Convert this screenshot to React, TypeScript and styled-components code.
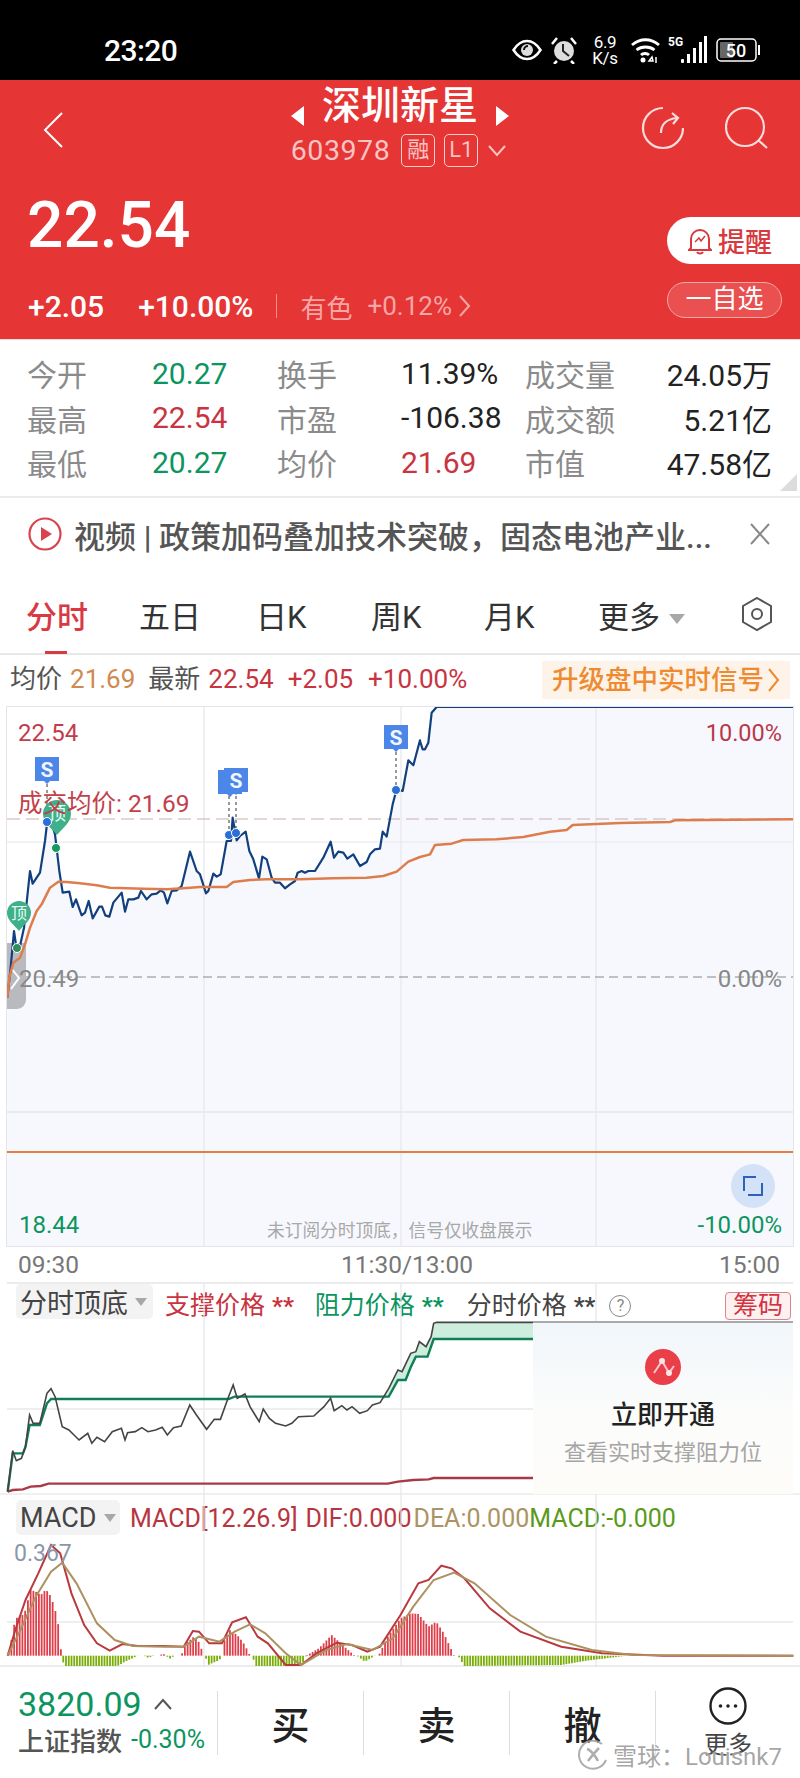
import React from 'react'
import styled, { createGlobalStyle } from 'styled-components'

const GlobalStyle = createGlobalStyle`
  html, body {
    margin: 0;
    padding: 0;
    background: #fff;
  }
  * {
    box-sizing: border-box;
  }
`

const FONT = `Roboto, "Noto Sans CJK SC", sans-serif`
const RED = '#c8343f'
const GREEN = '#0c9560'

// traced from the reference, converted to page pixels below
const priceRaw = [[22,890],[32,800],[42,690],[50,745],[60,735],[72,680],[90,510],[98,548],[120,515],[135,420],[142,360],[155,365],[165,400],[178,510],[188,575],[208,572],[218,618],[228,595],[245,643],[255,635],[266,600],[278,652],[298,617],[306,617],[316,643],[328,647],[340,605],[365,575],[375,632],[385,595],[400,595],[415,590],[423,570],[440,595],[455,580],[470,578],[482,568],[492,575],[502,607],[515,570],[530,568],[545,555],[570,452],[590,510],[600,520],[618,577],[625,570],[640,518],[650,527],[662,520],[680,420],[693,420],[698,350],[710,418],[720,405],[737,392],[748,450],[760,475],[777,532],[787,467],[800,475],[815,530],[825,545],[840,545],[855,562],[870,550],[885,540],[893,515],[905,510],[915,515],[925,510],[945,510],[970,470],[992,422],[1002,470],[1015,452],[1030,455],[1042,473],[1060,460],[1080,495],[1100,483],[1110,460],[1125,445],[1140,443],[1148,392],[1160,407],[1178,310],[1190,265],[1208,270],[1225,178],[1240,193],[1260,118],[1260,120],[1268,145],[1275,145],[1285,125],[1295,35],[1310,18],[2379,18]]
const avgRaw = [[22,890],[28,830],[40,785],[60,770],[75,730],[90,680],[110,630],[125,610],[150,560],[175,542],[200,543],[240,547],[290,553],[330,560],[380,562],[430,563],[500,565],[550,562],[600,558],[680,558],[700,543],[750,537],[800,535],[900,535],[1000,532],[1100,530],[1150,525],[1190,512],[1225,482],[1260,468],[1290,460],[1305,432],[1355,428],[1390,417],[1490,415],[1570,408],[1650,392],[1700,387],[1718,372],[1860,366],[2010,363],[2025,358],[2379,355]]
const toneRaw = [[15,605],[25,482],[32,512],[42,505],[50,470],[58,375],[65,400],[78,400],[92,310],[100,296],[108,320],[122,410],[135,420],[145,435],[155,450],[172,430],[180,460],[190,442],[205,455],[220,425],[238,415],[245,450],[250,428],[265,425],[278,413],[290,425],[305,420],[318,412],[328,435],[340,413],[355,408],[372,345],[385,375],[405,418],[420,388],[432,388],[448,320],[457,285],[465,325],[480,312],[490,350],[500,375],[508,395],[516,357],[528,385],[540,400],[560,408],[572,400],[585,380],[615,378],[635,350],[648,325],[655,362],[670,347],[680,360],[690,350],[705,370],[720,362],[730,345],[745,338],[762,295],[780,240],[788,245],[805,190],[815,185],[822,155],[835,170],[845,140],[850,100],[856,97],[1045,97]]
const resistRaw = [[15,605],[25,490],[45,490],[50,470],[58,405],[78,405],[92,340],[100,327],[448,327],[460,320],[762,320],[780,270],[795,270],[805,232],[815,200],[838,200],[850,147],[1045,147]]
const supportRaw = [[15,605],[25,600],[45,598],[60,590],[80,588],[95,581],[760,581],[780,575],[810,570],[840,568],[850,564],[1045,564]]
const difRaw = [[15,497],[30,420],[50,330],[75,250],[100,165],[118,190],[140,310],[165,405],[190,460],[215,482],[240,462],[270,468],[320,468],[360,470],[378,423],[390,425],[410,460],[435,460],[455,397],[482,382],[505,440],[525,460],[560,525],[590,525],[620,490],[660,458],[690,465],[720,485],[745,470],[785,375],[820,280],[840,270],[865,227],[885,235],[910,265],[960,355],[1020,425],[1100,470],[1180,490],[1300,497],[1555,497]]
const deaRaw = [[15,497],[40,420],[70,320],[100,245],[122,218],[150,280],[190,400],[225,450],[260,468],[320,470],[360,470],[390,440],[430,455],[460,425],[490,403],[520,430],[560,490],[590,525],[640,480],[680,462],[730,480],[770,445],[810,350],[850,270],[890,248],[930,280],[1000,375],[1070,440],[1160,480],[1240,495],[1555,497]]

const barSegments: { color: string; pts: number[][] }[] = [
  { color: '#df3f4b', pts: [[15,497],[20,470],[30,385],[40,380],[48,370],[60,300],[70,305],[80,315],[90,298],[100,320],[110,370],[118,435],[120,497]] },
  { color: '#7aad08', pts: [[122,497],[125,528],[230,528],[245,515],[270,497]] },
  { color: '#7aad08', pts: [[282,497],[290,503],[302,497]] },
  { color: '#df3f4b', pts: [[314,497],[318,490],[326,497]] },
  { color: '#7aad08', pts: [[326,497],[332,507],[342,497]] },
  { color: '#df3f4b', pts: [[355,497],[365,460],[380,440],[392,460],[398,497]] },
  { color: '#7aad08', pts: [[402,497],[408,525],[430,510],[436,497]] },
  { color: '#df3f4b', pts: [[438,497],[440,450],[450,420],[465,435],[480,465],[490,497]] },
  { color: '#7aad08', pts: [[495,497],[500,528],[590,528],[600,497]] },
  { color: '#df3f4b', pts: [[600,497],[625,475],[650,435],[675,470],[695,497]] },
  { color: '#7aad08', pts: [[700,497],[715,515],[735,497]] },
  { color: '#df3f4b', pts: [[742,497],[760,440],[785,385],[805,370],[820,372],[840,410],[855,395],[870,430],[890,497]] },
  { color: '#7aad08', pts: [[898,497],[910,528],[1100,525],[1150,512],[1230,497]] },
]

const main = (raw: number[][]) => raw.map(([x, y]) => [x / 3, 700 + y / 3])
const lower = (raw: number[][]) => raw.map(([x, y]) => [x / 1.96, 1290 + y / 3])
const macd = (raw: number[][]) => raw.map(([x, y]) => [x / 1.96, 1490 + y / 3])
const line = (pts: number[][]) => pts.map((p) => p.join(',')).join(' ')

const interp = (pts: number[][], x: number) => {
  for (let i = 1; i < pts.length; i++) {
    if (x <= pts[i][0]) {
      const [x0, y0] = pts[i - 1]
      const [x1, y1] = pts[i]
      return y0 + ((y1 - y0) * (x - x0)) / (x1 - x0 || 1)
    }
  }
  return pts[pts.length - 1][1]
}

const Page = styled.div`
  position: relative;
  width: 800px;
  height: 1778px;
  overflow: hidden;
  background: #fff;
  font-family: ${FONT};
`

/* status bar */
const StatusBar = styled.div`
  height: 80px;
  background: #000;
  color: #fff;
  display: flex;
  align-items: center;
  padding: 20px 40px 0 104px;
`
const Clock = styled.div`
  font-size: 30px;
  font-weight: 500;
  letter-spacing: -0.6px;
`
const StatusIcons = styled.div`
  margin-left: auto;
  display: flex;
  align-items: center;
`
const StatusIcon = styled.svg<{ $gap?: number }>`
  display: block;
  margin-left: ${(p) => p.$gap ?? 0}px;
`
const NetSpeed = styled.div`
  margin-left: 15px;
  width: 26px;
  font-size: 17px;
  line-height: 16px;
  text-align: center;
  letter-spacing: -0.3px;
`

/* red quote header */
const Header = styled.div`
  height: 260px;
  background: #e53535;
  color: #fff;
  border-bottom: 1px solid #f6dcd8;
`
const NavRow = styled.div`
  display: grid;
  grid-template-columns: 1fr auto 1fr;
  height: 92px;
  padding: 0 29px;
`
const NavLeft = styled.div`
  padding: 31px 0 0 13px;
`
const NavCenter = styled.div`
  display: flex;
  flex-direction: column;
  align-items: center;
`
const TitleRow = styled.div`
  display: flex;
  align-items: center;
  gap: 18px;
  height: 52px;
`
const Title = styled.div`
  font-size: 39px;
  line-height: 50px;
  font-weight: 500;
`
const Arrow = styled.div<{ $right?: boolean }>`
  width: 0;
  height: 0;
  margin-top: 20px;
  border-top: 10px solid transparent;
  border-bottom: 10px solid transparent;
  ${(p) => (p.$right ? 'border-left: 13px solid #fff;' : 'border-right: 13px solid #fff;')}
`
const CodeRow = styled.div`
  display: flex;
  align-items: center;
  gap: 9px;
  height: 36px;
  color: #f8c4c2;
`
const Code = styled.div`
  font-size: 28.5px;
  letter-spacing: 0.6px;
  margin-right: 2px;
`
const Badge = styled.div`
  width: 34px;
  height: 33px;
  border: 1.5px solid #f8cfcd;
  border-radius: 5px;
  font-size: 22px;
  line-height: 30px;
  text-align: center;
`
const NavRight = styled.div`
  display: flex;
  justify-content: flex-end;
  gap: 41px;
  padding-top: 26px;
`
const QuoteRow = styled.div`
  display: flex;
  justify-content: space-between;
  padding-left: 28px;
  padding-top: 16px;
`
const Price = styled.div`
  font-size: 64px;
  line-height: 76px;
  font-weight: 500;
  margin-left: -1px;
`
const Changes = styled.div`
  display: flex;
  align-items: center;
  margin-top: 24px;
  height: 36px;
`
const Change = styled.div`
  font-size: 30px;
  font-weight: 500;
  margin-right: 34px;
`
const SectorDivider = styled.div`
  width: 1px;
  height: 24px;
  background: #f2908e;
  margin: 0 23px 0 -11px;
`
const Sector = styled.div<{ $gap: number }>`
  font-size: 26px;
  color: #f6a7a5;
  margin-right: ${(p) => p.$gap}px;
`
const QuoteActions = styled.div`
  display: flex;
  flex-direction: column;
  align-items: flex-end;
  width: 133px;
  padding-top: 29px;
`
const AlertButton = styled.div`
  width: 133px;
  height: 47px;
  flex-shrink: 0;
  background: #fff;
  border-radius: 24px 0 0 24px;
  color: #d63a3f;
  display: flex;
  align-items: center;
  gap: 6px;
  padding-left: 21px;
  font-size: 27px;
  font-weight: 500;
`
const WatchButton = styled.div`
  width: 115px;
  height: 36px;
  flex-shrink: 0;
  margin: 18px 18px 0 0;
  border: 1.5px solid #f3a9a8;
  border-radius: 18px;
  background: #e9504f;
  font-size: 26px;
  line-height: 32px;
  text-align: center;
`

/* stats grid */
const Stats = styled.div`
  position: relative;
  height: 158px;
  padding: 11px 28px 0 27px;
  border-bottom: 2px solid #ececec;
  display: grid;
  grid-template-columns: 125px 125px 124px 124px 120px 127px;
  grid-auto-rows: 44.5px;
  align-items: center;
  font-size: 30px;
`
const StatLabel = styled.div`
  color: #8b8b8b;
  font-size: 30px;
`
const StatValue = styled.div<{ $color?: string; $right?: boolean }>`
  color: ${(p) => p.$color || '#222'};
  text-align: ${(p) => (p.$right ? 'right' : 'left')};
  white-space: nowrap;
`
const CornerMark = styled.div`
  position: absolute;
  right: 3px;
  bottom: 5px;
  width: 17px;
  height: 17px;
  background: #dcdcdc;
  clip-path: polygon(100% 0, 100% 100%, 0 100%);
`

/* news strip */
const News = styled.div`
  height: 72px;
  padding: 0 29px 0 28px;
  display: flex;
  align-items: center;
  gap: 12px;
  color: #555;
`
const NewsText = styled.div`
  flex: 1;
  font-size: 31px;
  font-weight: 500;
  white-space: nowrap;
  overflow: hidden;
`

/* period tabs */
const Tabs = styled.div`
  position: relative;
  height: 85px;
  padding: 26px 27px 0 26px;
  border-bottom: 2px solid #e8e8e8;
  display: grid;
  grid-template-columns: 113px 117px 115px 113px 114px 1fr auto;
  font-size: 31px;
  color: #333;
`
const Tab = styled.div<{ $active?: boolean }>`
  position: relative;
  display: flex;
  align-items: flex-start;
  gap: 9px;
  line-height: 44px;
  color: ${(p) => (p.$active ? '#d83a45' : '#333')};
  ${(p) => p.$active && 'font-weight: 500;'}
`
const TabMark = styled.div`
  position: absolute;
  left: 19px;
  bottom: -1px;
  width: 22px;
  height: 3px;
  background: #d83a45;
`
const Caret = styled.div<{ $size?: number; $top?: number }>`
  width: 0;
  height: 0;
  margin-top: ${(p) => p.$top ?? 0}px;
  border-left: ${(p) => p.$size || 8}px solid transparent;
  border-right: ${(p) => p.$size || 8}px solid transparent;
  border-top: ${(p) => (p.$size || 8) + 2}px solid #a8a8a8;
`

/* last price bar */
const PriceBar = styled.div`
  height: 52px;
  padding: 6px 10px 0;
  display: flex;
  align-items: flex-start;
  font-size: 26px;
  line-height: 36px;
`
const BarText = styled.span<{ $color: string; $gap: number }>`
  color: ${(p) => p.$color};
  margin-right: ${(p) => p.$gap}px;
  white-space: nowrap;
`
const Upgrade = styled.div`
  margin-left: auto;
  height: 38px;
  width: 248px;
  padding-left: 10px;
  background: #fdf3e8;
  color: #ee8b30;
  font-size: 26.5px;
  font-weight: 500;
  display: flex;
  align-items: center;
  gap: 3px;
`

/* main chart */
const ChartBox = styled.div`
  position: relative;
  width: 786px;
  height: 539px;
  margin-left: 7px;
  outline: 1px solid #e4e4ea;
`
const ChartSvg = styled.svg`
  display: block;
  overflow: visible;
`
const ChartLabel = styled.div<{ $x?: number; $right?: number; $y: number; $color: string; $size?: number }>`
  position: absolute;
  top: ${(p) => p.$y}px;
  ${(p) => (p.$right !== undefined ? `right: ${p.$right}px;` : `left: ${p.$x}px;`)}
  color: ${(p) => p.$color};
  font-size: ${(p) => p.$size || 24}px;
  line-height: 30px;
  white-space: nowrap;
`
const ExpandButton = styled.div`
  position: absolute;
  right: 18px;
  top: 457px;
  width: 44px;
  height: 44px;
  border-radius: 50%;
  background: #d4e2f8;
  display: flex;
  align-items: center;
  justify-content: center;
`

const TimeRow = styled.div`
  height: 38px;
  margin: 0 7px;
  padding: 0 13px 0 11px;
  border-bottom: 2px solid #ececec;
  display: flex;
  justify-content: space-between;
  align-items: center;
  font-size: 24.5px;
  color: #777;
`
const MiddleTime = styled.span`
  margin-left: 16px;
`

/* indicator header rows */
const IndicatorRow = styled.div<{ $height: number; $size: number }>`
  height: ${(p) => p.$height}px;
  padding-left: 16px;
  display: flex;
  align-items: flex-start;
  font-size: ${(p) => p.$size}px;
  white-space: nowrap;
`
const Chip = styled.div<{ $width: number; $height: number; $top?: number }>`
  width: ${(p) => p.$width}px;
  height: ${(p) => p.$height}px;
  margin-top: ${(p) => p.$top ?? 0}px;
  padding-left: 4px;
  background: #f3f3f3;
  border-radius: 5px;
  color: #444;
  display: flex;
  align-items: center;
  gap: 7px;
  font-size: 27px;
`
const Legend = styled.span<{ $color: string; $gap?: number; $top?: number }>`
  color: ${(p) => p.$color};
  margin-left: ${(p) => p.$gap ?? 0}px;
  margin-top: ${(p) => p.$top ?? 3}px;
  line-height: 38px;
`
const Stars = styled.span`
  margin-left: 7px;
  font-size: 24px;
  font-weight: 700;
`
const Help = styled.div`
  width: 22px;
  height: 22px;
  margin: 11px 0 0 14px;
  border: 1px solid #888;
  border-radius: 50%;
  color: #888;
  font-size: 16px;
  line-height: 20px;
  text-align: center;
`
const ChipsButton = styled.div`
  width: 66px;
  height: 28px;
  margin: 8px 9px 0 auto;
  border: 1.5px solid #d9868c;
  border-radius: 4px;
  background: #fdf0f0;
  color: #d3343f;
  font-size: 25px;
  line-height: 25px;
  text-align: center;
`

const LowerChart = styled.div`
  position: relative;
  height: 173px;
  border-bottom: 2px solid #f0f0f0;
`
const Promo = styled.div`
  position: absolute;
  left: 533px;
  top: 0;
  width: 260px;
  height: 173px;
  padding-top: 26px;
  background: linear-gradient(180deg, #f1f6fa 0%, #fcfcfb 55%, #fdfcf9 100%);
  border-top: 2px solid #aaa;
  display: flex;
  flex-direction: column;
  align-items: center;
  margin-top: -1px;
`
const PromoTitle = styled.div`
  margin-top: 11px;
  font-size: 26px;
  font-weight: 500;
  line-height: 38px;
  color: #222;
`
const PromoText = styled.div`
  margin-top: 3px;
  font-size: 22px;
  line-height: 32px;
  color: #a5a5a5;
`

const MacdChart = styled.div`
  height: 127px;
  border-bottom: 2px solid #ececec;
`

/* bottom bar */
const BottomBar = styled.div`
  position: relative;
  height: 111px;
  display: grid;
  grid-template-columns: 218px 146px 146px 146px 1fr;
  align-items: center;
`
const IndexCell = styled.div`
  padding-left: 18px;
  height: 64px;
  border-right: 1px solid #ddd;
`
const IndexTop = styled.div`
  display: flex;
  align-items: center;
  gap: 11px;
  height: 36px;
  margin-top: -5px;
  color: ${GREEN};
  font-size: 34px;
`
const IndexBottom = styled.div`
  display: flex;
  align-items: center;
  gap: 9px;
  height: 36px;
  color: ${GREEN};
  font-size: 25px;
`
const IndexName = styled.span`
  color: #555;
  font-weight: 500;
  font-size: 26px;
`
const TradeCell = styled.div`
  height: 64px;
  border-right: 1px solid #ddd;
  display: flex;
  align-items: center;
  justify-content: center;
  font-size: 38px;
  font-weight: 500;
  color: #222;
`
const MoreCell = styled.div`
  display: flex;
  flex-direction: column;
  align-items: center;
  gap: 4px;
  margin-top: 2px;
  font-size: 24px;
  line-height: 32px;
  color: #444;
`
const Watermark = styled.div`
  position: absolute;
  left: 578px;
  top: 70px;
  display: flex;
  align-items: center;
  gap: 5px;
  font-size: 24px;
  color: rgba(150, 150, 150, 0.85);
  text-shadow: 0 0 2px #fff;
`

const StatusIconSet = () => (
  <StatusIcons>
    <StatusIcon width="30" height="22" viewBox="0 0 30 22" fill="none">
      <path d="M1.5 11C6 4 10.500 2 15 2s9 2 13.500 9C24 18 19.500 20 15 20S6 18 1.500 11z" stroke="#fff" strokeWidth="2.500" />
      <circle cx="15" cy="11" r="6" fill="#ddd" />
      <path d="M12 11a4 4 0 0 1 4-4" stroke="#111" strokeWidth="2" />
    </StatusIcon>
    <StatusIcon $gap={9} width="26" height="28" viewBox="0 0 26 28" fill="none">
      <circle cx="13" cy="15" r="10" fill="#ddd" />
      <path d="M12 8v7l6 5" stroke="#222" strokeWidth="2" />
      <path d="M1 8l5-6M25 8l-5-6M6 25l-3 3M20 25l3 3" stroke="#fff" strokeWidth="2.500" />
    </StatusIcon>
    <NetSpeed>
      6.9
      <br />
      K/s
    </NetSpeed>
    <StatusIcon $gap={13} width="29" height="26" viewBox="0 0 29 26" fill="none" stroke="#fff" strokeWidth="2.800">
      <path d="M1 8c8-7 19-7 27 0M5.500 13c5-4 13-4 18 0M10 18c2-2 6-2 8 0" />
      <circle cx="12" cy="23" r="2.500" fill="#fff" stroke="none" />
      <path d="M18 24h4l-1-4zM25 20v6" strokeWidth="1.500" />
    </StatusIcon>
    <StatusIcon $gap={8} width="39" height="30" viewBox="0 0 39 30" fill="#fff">
      <text x="0" y="11" fontSize="12" fontFamily="Roboto" fontWeight="700">5G</text>
      <rect x="13" y="24" width="3" height="4" rx="1" />
      <rect x="19" y="19" width="3" height="9" />
      <rect x="25" y="13" width="3" height="15" />
      <rect x="31" y="7" width="3" height="21" />
      <rect x="36" y="1" width="3" height="27" />
    </StatusIcon>
    <StatusIcon $gap={9} width="44" height="26" viewBox="0 0 44 26" fill="none">
      <rect x="1" y="2" width="39" height="22" rx="4" stroke="#fff" strokeWidth="1.500" />
      <rect x="4" y="5" width="13" height="16" rx="1" fill="#666" />
      <text x="20" y="19.500" textAnchor="middle" fontSize="18" fontFamily="Roboto" fontWeight="500" fill="#fff">50</text>
      <rect x="42" y="8" width="2" height="10" fill="#fff" />
    </StatusIcon>
  </StatusIcons>
)

const Thin = ({ d, color, w, h, width = 2 }: { d: string; color: string; w: number; h: number; width?: number }) => (
  <svg width={w} height={h} viewBox={`0 0 ${w} ${h}`} fill="none" stroke={color} strokeWidth={width}>
    <path d={d} />
  </svg>
)

const VerticalGrid = ({ y1, y2 }: { y1: number; y2: number }) => (
  <>
    {[204, 401, 596].map((x) => (
      <line key={x} x1={x} x2={x} y1={y1} y2={y2} stroke="#e6e6ec" strokeWidth="1.2" />
    ))}
  </>
)

const SignalTag = ({ x, y }: { x: number; y: number }) => (
  <g>
    <path d={`M${x - 12} ${y}h24v24h-9l-3 3-3-3h-9z`} fill="#4b86e8" />
    <text x={x} y={y + 20} textAnchor="middle" fontSize="21" fontWeight="700" fontFamily="Roboto" fill="#f2f6ff">S</text>
  </g>
)

const TopMark = ({ x, y, r }: { x: number; y: number; r: number }) => (
  <g>
    <path d={`M${x - r} ${y}a${r} ${r} 0 1 1 ${r * 2} 0c0 ${r * 0.6}-${r * 0.6} ${r}-${r} ${r * 1.5}c-${r * 0.4}-${r * 0.5}-${r}-${r * 0.9}-${r}-${r * 1.5}z`} fill="#3fb08a" />
    <text x={x} y={y + 6} textAnchor="middle" fontSize={r + 4} fontFamily="Noto Sans CJK SC" fill="#eafff6">顶</text>
  </g>
)

const Dot = ({ x, y, fill }: { x: number; y: number; fill: string }) => (
  <circle cx={x} cy={y} r="4.500" fill={fill} stroke="#fff" strokeWidth="1" />
)

const MainChart = () => {
  const price = main(priceRaw)
  const avg = main(avgRaw)
  return (
    <ChartBox>
      <ChartSvg width="786" height="539" viewBox="7 706 786 539">
        <polygon points={`7,1245 ${line(price)} 793,1245`} fill="#f7f8fd" />
        <VerticalGrid y1={706} y2={1245} />
        <line x1="7" x2="793" y1="841" y2="841" stroke="#e6e6ec" />
        <line x1="7" x2="793" y1="1111" y2="1111" stroke="#e6e6ec" strokeWidth="1.500" />
        <line x1="7" x2="793" y1="818" y2="818" stroke="#c9abb0" strokeWidth="1.200" strokeDasharray="13 6" />
        <line x1="7" x2="793" y1="976" y2="976" stroke="#888" strokeWidth="1.200" strokeDasharray="9 5" />
        <line x1="7" x2="793" y1="1151" y2="1151" stroke="#e08044" strokeWidth="2.200" />
        <path d="M7 942h19v57a9 9 0 0 1-9 9H7z" fill="#b9babf" />
        <path d="M11 967l8 10-8 11" fill="none" stroke="#fff" strokeWidth="2" />
        <polyline points={line(price)} fill="none" stroke="#12407f" strokeWidth="2.200" strokeLinejoin="round" />
        <polyline points={line(avg)} fill="none" stroke="#dd7d4c" strokeWidth="2.500" strokeLinejoin="round" />
        <line x1="47" x2="47" y1="783" y2="821" stroke="#333" strokeDasharray="3 3" />
        <line x1="229" x2="229" y1="795" y2="834" stroke="#333" strokeDasharray="3 3" />
        <line x1="236" x2="236" y1="795" y2="832" stroke="#333" strokeDasharray="3 3" />
        <line x1="396" x2="396" y1="751" y2="789" stroke="#333" strokeDasharray="3 3" />
        <TopMark x={57} y={813} r={14} />
        <TopMark x={19} y={912} r={12} />
        <Dot x={47} y={821} fill="#2a6fd8" />
        <Dot x={56} y={847} fill="#17995f" />
        <Dot x={17} y={947} fill="#2e8f5e" />
        <SignalTag x={47} y={756} />
        <SignalTag x={230} y={769} />
        <SignalTag x={236} y={767} />
        <SignalTag x={396} y={724} />
        <Dot x={229} y={834} fill="#2a6fd8" />
        <Dot x={236} y={832} fill="#2a6fd8" />
        <Dot x={396} y={789} fill="#2a6fd8" />
      </ChartSvg>
      <ChartLabel $x={11} $y={11} $color="#c43c4a">22.54</ChartLabel>
      <ChartLabel $x={11} $y={82} $color="#c2404a" $size={24.5}>成交均价: 21.69</ChartLabel>
      <ChartLabel $x={12} $y={257} $color="#888">20.49</ChartLabel>
      <ChartLabel $right={11} $y={11} $color="#b8384a" $size={23.500}>10.00%</ChartLabel>
      <ChartLabel $right={11} $y={257} $color="#888">0.00%</ChartLabel>
      <ChartLabel $x={12} $y={503} $color={GREEN}>18.44</ChartLabel>
      <ChartLabel $right={11} $y={503} $color={GREEN}>-10.00%</ChartLabel>
      <ChartLabel $x={260} $y={509} $color="#a8a8a8" $size={17.700}>未订阅分时顶底，信号仅收盘展示</ChartLabel>
      <ExpandButton>
        <Thin d="M14 2H2v14M6 20h14V8" color="#2d62b8" w={22} h={22} />
      </ExpandButton>
    </ChartBox>
  )
}

const ToneChart = () => {
  const tone = lower(toneRaw)
  const resist = lower(resistRaw)
  const zone = [...tone.slice(58), ...[...resist.slice(10)].reverse()]
  return (
    <LowerChart>
      <ChartSvg width="800" height="173" viewBox="0 1322 800 173">
        <VerticalGrid y1={1283} y2={1495} />
        <line x1="7" x2="793" y1="1409" y2="1409" stroke="#e8e8e8" strokeWidth="1.500" />
        <polygon points={line(zone)} fill="#cdeedc" />
        <polyline points={line(lower(supportRaw))} fill="none" stroke="#a83a45" strokeWidth="2.400" />
        <polyline points={line(resist)} fill="none" stroke="#0f7f58" strokeWidth="2.400" />
        <polyline points={line(tone)} fill="none" stroke="#444" strokeWidth="1.600" />
      </ChartSvg>
      <Promo>
        <svg width="36" height="36" viewBox="0 0 36 36">
          <circle cx="18" cy="18" r="18" fill="#ea3f48" />
          <path d="M9 24l8-12 7 12 5-7" fill="none" stroke="#f9c8c9" strokeWidth="2" />
          <circle cx="17" cy="12" r="3" fill="#fde6e6" />
          <circle cx="24" cy="24" r="3" fill="#fde6e6" />
        </svg>
        <PromoTitle>立即开通</PromoTitle>
        <PromoText>查看实时支撑阻力位</PromoText>
      </Promo>
    </LowerChart>
  )
}

const MacdBars = () => (
  <>
    {barSegments.map((seg, i) => {
      const pts = macd(seg.pts)
      const base = macd([[0, 497]])[0][1]
      const bars: React.ReactElement[] = []
      for (let x = pts[0][0] + 1; x < pts[pts.length - 1][0]; x += 2.75) {
        bars.push(<line key={x} x1={x} x2={x} y1={base} y2={interp(pts, x)} stroke={seg.color} strokeWidth="1.800" />)
      }
      return <g key={i}>{bars}</g>
    })}
  </>
)

const App = () => {
  return (
    <Page>
      <GlobalStyle />
      <StatusBar>
        <Clock>23:20</Clock>
        <StatusIconSet />
      </StatusBar>

      <Header>
        <NavRow>
          <NavLeft>
            <Thin d="M20 2L3 19l17 17" color="#fff" w={22} h={38} />
          </NavLeft>
          <NavCenter>
            <TitleRow>
              <Arrow />
              <Title>深圳新星</Title>
              <Arrow $right />
            </TitleRow>
            <CodeRow>
              <Code>603978</Code>
              <Badge>融</Badge>
              <Badge>L1</Badge>
              <Thin d="M2 3l8 9 8-9" color="#f8c4c2" w={22} h={14} />
            </CodeRow>
          </NavCenter>
          <NavRight>
            <svg width="44" height="46" viewBox="0 0 44 46" fill="none" stroke="#fbdcdb" strokeWidth="2.200">
              <path d="M23 2A20 20 0 1 0 43 22" />
              <path d="M21 27c0-8 5-14 16-15M32 7l6 5-5 6" />
            </svg>
            <svg width="46" height="46" viewBox="0 0 46 46" fill="none" stroke="#fbdcdb" strokeWidth="2.200">
              <circle cx="20" cy="21" r="19" />
              <path d="M33 34l9 8" />
            </svg>
          </NavRight>
        </NavRow>
        <QuoteRow>
          <div>
            <Price>22.54</Price>
            <Changes>
              <Change>+2.05</Change>
              <Change>+10.00%</Change>
              <SectorDivider />
              <Sector $gap={15}>有色</Sector>
              <Sector $gap={6}>+0.12%</Sector>
              <Thin d="M2 2l9 10-9 10" color="#f6a7a5" w={13} h={24} />
            </Changes>
          </div>
          <QuoteActions>
            <AlertButton>
              <svg width="24" height="28" viewBox="0 0 24 28" fill="none" stroke="#d63a3f" strokeWidth="2">
                <path d="M3 21V12a9 9 0 0 1 18 0v9l2 2H1zM9 25c1 2 5 2 6 0" />
                <path d="M7 15l4-4 2 3 4-5" strokeWidth="1.500" />
              </svg>
              提醒
            </AlertButton>
            <WatchButton>一自选</WatchButton>
          </QuoteActions>
        </QuoteRow>
      </Header>

      <Stats>
        <StatLabel>今开</StatLabel>
        <StatValue $color={GREEN}>20.27</StatValue>
        <StatLabel>换手</StatLabel>
        <StatValue>11.39%</StatValue>
        <StatLabel>成交量</StatLabel>
        <StatValue $right>24.05万</StatValue>
        <StatLabel>最高</StatLabel>
        <StatValue $color={RED}>22.54</StatValue>
        <StatLabel>市盈</StatLabel>
        <StatValue>-106.38</StatValue>
        <StatLabel>成交额</StatLabel>
        <StatValue $right>5.21亿</StatValue>
        <StatLabel>最低</StatLabel>
        <StatValue $color={GREEN}>20.27</StatValue>
        <StatLabel>均价</StatLabel>
        <StatValue $color={RED}>21.69</StatValue>
        <StatLabel>市值</StatLabel>
        <StatValue $right>47.58亿</StatValue>
        <CornerMark />
      </Stats>

      <News>
        <svg width="34" height="34" viewBox="0 0 34 34" fill="none">
          <circle cx="17" cy="17" r="15.500" stroke="#d8434e" strokeWidth="2.200" />
          <path d="M13 10l11 7-11 7z" fill="#d8434e" />
        </svg>
        <NewsText>视频 | 政策加码叠加技术突破，固态电池产业...</NewsText>
        <Thin d="M2 2l18 20M20 2L2 22" color="#888" w={22} h={24} />
      </News>

      <Tabs>
        <Tab $active>
          分时
          <TabMark />
        </Tab>
        <Tab>五日</Tab>
        <Tab>日K</Tab>
        <Tab>周K</Tab>
        <Tab>月K</Tab>
        <Tab>
          更多
          <Caret $top={18} />
        </Tab>
        <svg width="32" height="36" viewBox="0 0 32 36" fill="none" stroke="#555" strokeWidth="2">
          <path d="M16 2l14 8v16l-14 8-14-8V10z" />
          <circle cx="16" cy="18" r="5" />
        </svg>
      </Tabs>

      <PriceBar>
        <BarText $color="#555" $gap={8}>均价</BarText>
        <BarText $color="#cf8a52" $gap={13}>21.69</BarText>
        <BarText $color="#555" $gap={8}>最新</BarText>
        <BarText $color={RED} $gap={14}>22.54</BarText>
        <BarText $color={RED} $gap={15}>+2.05</BarText>
        <BarText $color={RED} $gap={10}>+10.00%</BarText>
        <Upgrade>
          升级盘中实时信号
          <Thin d="M2 2l9 11-9 11" color="#ee8b30" w={13} h={26} />
        </Upgrade>
      </PriceBar>

      <MainChart />

      <TimeRow>
        <span>09:30</span>
        <MiddleTime>11:30/13:00</MiddleTime>
        <span>15:00</span>
      </TimeRow>

      <IndicatorRow $height={38} $size={25}>
        <Chip $width={137} $height={35}>
          分时顶底
          <Caret $size={6} />
        </Chip>
        <Legend $color={RED} $gap={12}>支撑价格<Stars>**</Stars></Legend>
        <Legend $color={GREEN} $gap={21}>阻力价格<Stars>**</Stars></Legend>
        <Legend $color="#444" $gap={23}>分时价格<Stars>**</Stars></Legend>
        <Help>?</Help>
        <ChipsButton>筹码</ChipsButton>
      </IndicatorRow>
      <ToneChart />

      <IndicatorRow $height={45} $size={25}>
        <Chip $width={104} $height={35} $top={5}>
          MACD
          <Caret $size={6} />
        </Chip>
        <Legend $color="#b8353f" $gap={10} $top={5}>MACD[12.26.9]</Legend>
        <Legend $color="#b8353f" $gap={8} $top={5}>DIF:0.000</Legend>
        <Legend $color="#ab9363" $gap={2} $top={5}>DEA:0.000</Legend>
        <Legend $color="#5a9a1a" $gap={0} $top={5}>MACD:-0.000</Legend>
      </IndicatorRow>
      <MacdChart>
        <ChartSvg width="800" height="127" viewBox="0 1540 800 127">
          <VerticalGrid y1={1495} y2={1667} />
          <line x1="7" x2="793" y1="1622" y2="1622" stroke="#e8e8e8" strokeWidth="1.500" />
          <MacdBars />
          <polyline points={line(macd(difRaw))} fill="none" stroke="#b83a3f" strokeWidth="2" />
          <polyline points={line(macd(deaRaw))} fill="none" stroke="#ae9160" strokeWidth="2" />
          <text x="14" y="1561" fontSize="23" fontFamily="Roboto" fill="#8b97a8">0.367</text>
        </ChartSvg>
      </MacdChart>

      <BottomBar>
        <IndexCell>
          <IndexTop>
            3820.09
            <Thin d="M2 12l8-9 8 9" color="#555" w={20} h={14} />
          </IndexTop>
          <IndexBottom>
            <IndexName>上证指数</IndexName>
            -0.30%
          </IndexBottom>
        </IndexCell>
        <TradeCell>买</TradeCell>
        <TradeCell>卖</TradeCell>
        <TradeCell>撤</TradeCell>
        <MoreCell>
          <svg width="38" height="38" viewBox="0 0 38 38" fill="none">
            <circle cx="19" cy="19" r="17.500" stroke="#222" strokeWidth="2.400" />
            <circle cx="11.500" cy="19" r="1.800" fill="#222" />
            <circle cx="19" cy="19" r="1.800" fill="#222" />
            <circle cx="26.500" cy="19" r="1.800" fill="#222" />
          </svg>
          更多
        </MoreCell>
        <Watermark>
          <svg width="30" height="30" viewBox="0 0 30 30" fill="none" stroke="rgba(160,160,160,0.85)" strokeWidth="2">
            <path d="M24 4a14 14 0 1 0 4 16" />
            <path d="M9 9c4 1 9 8 11 12M21 8c-3 3-8 9-11 13" strokeWidth="2.500" />
          </svg>
          雪球：Louisnk7
        </Watermark>
      </BottomBar>
    </Page>
  )
}

export default App
